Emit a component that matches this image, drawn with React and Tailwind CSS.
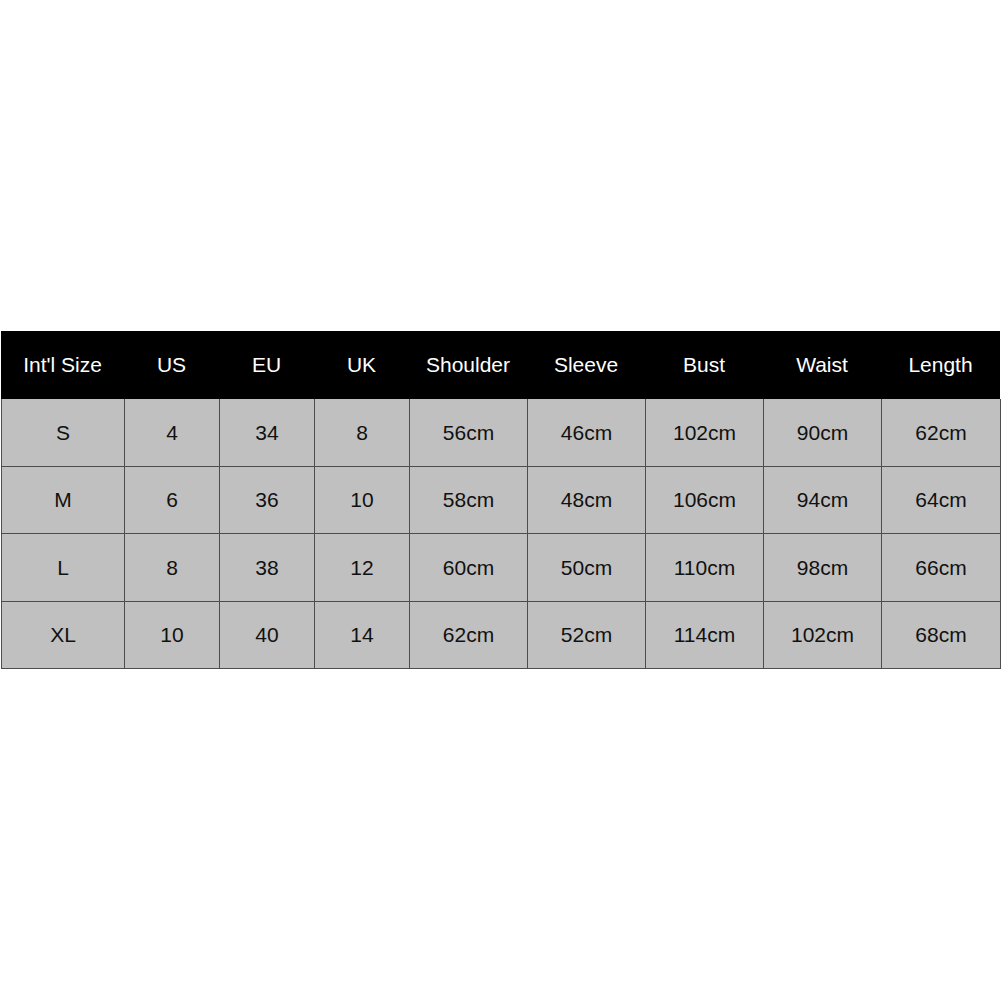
const cols = ["Int'l Size", "US", "EU", "UK", "Shoulder", "Sleeve", "Bust", "Waist", "Length"];

const rows = [
  ["S", "4", "34", "8", "56cm", "46cm", "102cm", "90cm", "62cm"],
  ["M", "6", "36", "10", "58cm", "48cm", "106cm", "94cm", "64cm"],
  ["L", "8", "38", "12", "60cm", "50cm", "110cm", "98cm", "66cm"],
  ["XL", "10", "40", "14", "62cm", "52cm", "114cm", "102cm", "68cm"],
];

const grid = "grid grid-cols-[123px_95px_95px_95px_118px_118px_118px_118px_119px]";

export default function App() {
  return (
    <div
      className="h-[1001px] w-[1001px] bg-white flex flex-col pt-[331px] text-[21px]"
      style={{ fontFamily: '"Liberation Sans", Arial, sans-serif' }}
    >
      <div className="ml-[1px] w-[999px]">
        {/* header */}
        <div className={`${grid} h-[68px] bg-black text-white`}>
          {cols.map((c) => (
            <div key={c} className="flex items-center justify-center">
              {c}
            </div>
          ))}
        </div>

        {/* rows */}
        <div className="border-l border-[#4d4d4d]">
          {rows.map((r, i) => (
            <div
              key={r[0]}
              className={`${grid} ${i % 2 === 0 ? "h-[68px]" : "h-[67px]"} bg-[#c0c0c0] text-[#111]`}
            >
              {r.map((v, j) => (
                <div
                  key={j}
                  className="flex items-center justify-center border-r border-b border-[#4d4d4d]"
                >
                  {v}
                </div>
              ))}
            </div>
          ))}
        </div>
      </div>
    </div>
  );
}
